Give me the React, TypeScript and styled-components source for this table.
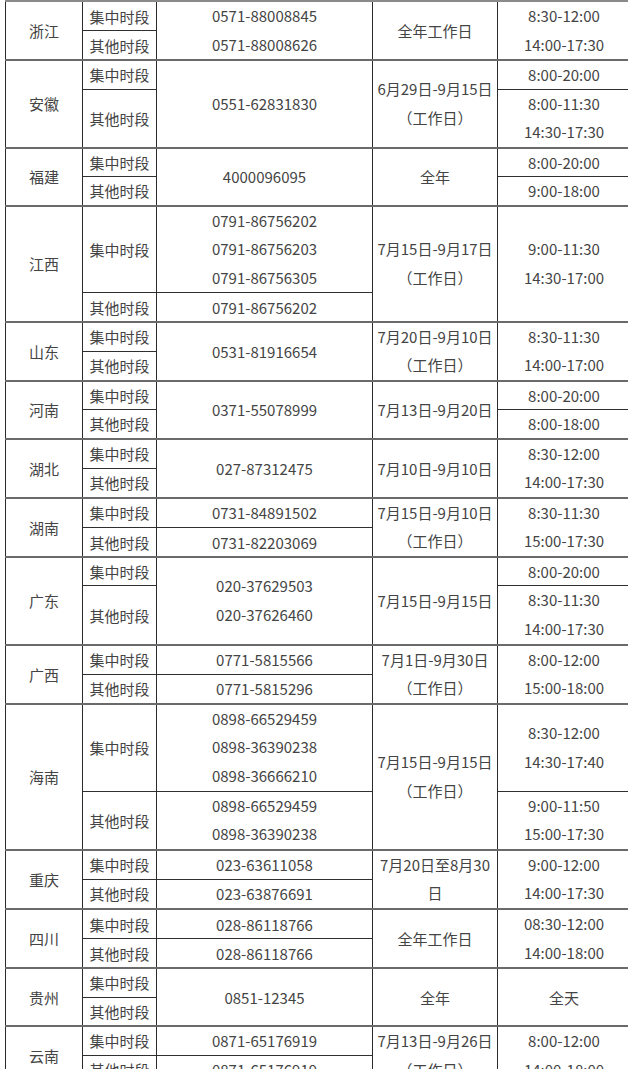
import {Fragment} from "react";
import styled, {createGlobalStyle} from "styled-components";

const GlobalStyle = createGlobalStyle`
  html,
  body {
    margin: 0;
    padding: 0;
    background: #fff;
    overflow: hidden;
  }

  body {
    font-family: "Microsoft YaHei", "Noto Sans CJK SC", "Noto Sans", sans-serif;
  }
`;

const Page = styled.div`
  padding-left: 5px;
  width: 640px;
`;

const Table = styled.table`
  border-collapse: collapse;
  table-layout: fixed;
  width: 625px;
  border-top: 2px solid #8a8a8a;
  border-left: 1px solid #9a9a9a;
  color: #444;
  font-size: 15px;
`;

const Col = styled.col<{$w: number}>`
  width: ${(p) => p.$w}px;
`;

const Row = styled.tr`
  height: 28.9px;
`;

const Cell = styled.td<{$top?: boolean}>`
  padding: 0;
  text-align: center;
  vertical-align: middle;
  line-height: 27px;
  white-space: nowrap;
  border-left: 1px solid #2b2b2b;
  border-right: 1px solid #2b2b2b;
  border-top: ${(p) => (p.$top ? "2px solid #6a6a6a" : "1px solid #2f2f2f")};
`;

const Line = styled.div`
  height: 28.6px;
  line-height: 28.6px;
`;

type Block = {lines: string[]; span: number};

type Province = {
  name: string;
  rows: number;
  seg: Block[];
  phone: Block[];
  date: Block[];
  time: Block[];
};

const b = (span: number, ...lines: string[]): Block => ({lines, span});

const twoSeg = [b(1, "集中时段"), b(1, "其他时段")];
const WORK = "（工作日）";

const provinces: Province[] = [
  {
    name: "浙江",
    rows: 2,
    seg: twoSeg,
    phone: [b(2, "0571-88008845", "0571-88008626")],
    date: [b(2, "全年工作日")],
    time: [b(2, "8:30-12:00", "14:00-17:30")],
  },
  {
    name: "安徽",
    rows: 3,
    seg: [b(1, "集中时段"), b(2, "其他时段")],
    phone: [b(3, "0551-62831830")],
    date: [b(3, "6月29日-9月15日", WORK)],
    time: [b(1, "8:00-20:00"), b(2, "8:00-11:30", "14:30-17:30")],
  },
  {
    name: "福建",
    rows: 2,
    seg: twoSeg,
    phone: [b(2, "4000096095")],
    date: [b(2, "全年")],
    time: [b(1, "8:00-20:00"), b(1, "9:00-18:00")],
  },
  {
    name: "江西",
    rows: 4,
    seg: [b(3, "集中时段"), b(1, "其他时段")],
    phone: [
      b(3, "0791-86756202", "0791-86756203", "0791-86756305"),
      b(1, "0791-86756202"),
    ],
    date: [b(4, "7月15日-9月17日", WORK)],
    time: [b(4, "9:00-11:30", "14:30-17:00")],
  },
  {
    name: "山东",
    rows: 2,
    seg: twoSeg,
    phone: [b(2, "0531-81916654")],
    date: [b(2, "7月20日-9月10日", WORK)],
    time: [b(2, "8:30-11:30", "14:00-17:00")],
  },
  {
    name: "河南",
    rows: 2,
    seg: twoSeg,
    phone: [b(2, "0371-55078999")],
    date: [b(2, "7月13日-9月20日")],
    time: [b(1, "8:00-20:00"), b(1, "8:00-18:00")],
  },
  {
    name: "湖北",
    rows: 2,
    seg: twoSeg,
    phone: [b(2, "027-87312475")],
    date: [b(2, "7月10日-9月10日")],
    time: [b(2, "8:30-12:00", "14:00-17:30")],
  },
  {
    name: "湖南",
    rows: 2,
    seg: twoSeg,
    phone: [b(1, "0731-84891502"), b(1, "0731-82203069")],
    date: [b(2, "7月15日-9月10日", WORK)],
    time: [b(2, "8:30-11:30", "15:00-17:30")],
  },
  {
    name: "广东",
    rows: 3,
    seg: [b(1, "集中时段"), b(2, "其他时段")],
    phone: [b(3, "020-37629503", "020-37626460")],
    date: [b(3, "7月15日-9月15日")],
    time: [b(1, "8:00-20:00"), b(2, "8:30-11:30", "14:00-17:30")],
  },
  {
    name: "广西",
    rows: 2,
    seg: twoSeg,
    phone: [b(1, "0771-5815566"), b(1, "0771-5815296")],
    date: [b(2, "7月1日-9月30日", WORK)],
    time: [b(2, "8:00-12:00", "15:00-18:00")],
  },
  {
    name: "海南",
    rows: 5,
    seg: [b(3, "集中时段"), b(2, "其他时段")],
    phone: [
      b(3, "0898-66529459", "0898-36390238", "0898-36666210"),
      b(2, "0898-66529459", "0898-36390238"),
    ],
    date: [b(5, "7月15日-9月15日", WORK)],
    time: [b(3, "8:30-12:00", "14:30-17:40"), b(2, "9:00-11:50", "15:00-17:30")],
  },
  {
    name: "重庆",
    rows: 2,
    seg: twoSeg,
    phone: [b(1, "023-63611058"), b(1, "023-63876691")],
    date: [b(2, "7月20日至8月30", "日")],
    time: [b(2, "9:00-12:00", "14:00-17:30")],
  },
  {
    name: "四川",
    rows: 2,
    seg: twoSeg,
    phone: [b(1, "028-86118766"), b(1, "028-86118766")],
    date: [b(2, "全年工作日")],
    time: [b(2, "08:30-12:00", "14:00-18:00")],
  },
  {
    name: "贵州",
    rows: 2,
    seg: twoSeg,
    phone: [b(2, "0851-12345")],
    date: [b(2, "全年")],
    time: [b(2, "全天")],
  },
  {
    name: "云南",
    rows: 2,
    seg: twoSeg,
    phone: [b(1, "0871-65176919"), b(1, "0871-65176919")],
    date: [b(2, "7月13日-9月26日", WORK)],
    time: [b(2, "8:00-12:00", "14:00-18:00")],
  },
];

// which block of a column starts on row i (null when a rowspan covers it)
const blockAt = (blocks: Block[], i: number) => {
  let r = 0;
  for (const blk of blocks) {
    if (r === i) return blk;
    r += blk.span;
  }
  return null;
};

const renderBlock = (blk: Block | null, key: string, top: boolean) => {
  if (!blk) return null;
  return (
    <Cell key={key} rowSpan={blk.span} $top={top}>
      {blk.lines.length === 1
        ? blk.lines[0]
        : blk.lines.map((l, k) => <Line key={k}>{l}</Line>)}
    </Cell>
  );
};

const App = () => {
  return (
    <Page>
      <GlobalStyle />
      <Table>
        <colgroup>
          <Col $w={77} />
          <Col $w={74} />
          <Col $w={216} />
          <Col $w={125} />
          <Col $w={133} />
        </colgroup>
        <tbody>
          {provinces.map((p, pi) => (
            <Fragment key={p.name}>
              {Array.from({length: p.rows}).map((_, i) => {
                const top = i === 0 && pi > 0;
                return (
                  <Row key={i}>
                    {i === 0 && (
                      <Cell rowSpan={p.rows} $top={top}>
                        {p.name}
                      </Cell>
                    )}
                    {renderBlock(blockAt(p.seg, i), "s", top)}
                    {renderBlock(blockAt(p.phone, i), "p", top)}
                    {renderBlock(blockAt(p.date, i), "d", top)}
                    {renderBlock(blockAt(p.time, i), "t", top)}
                  </Row>
                );
              })}
            </Fragment>
          ))}
        </tbody>
      </Table>
    </Page>
  );
};

export default App;
